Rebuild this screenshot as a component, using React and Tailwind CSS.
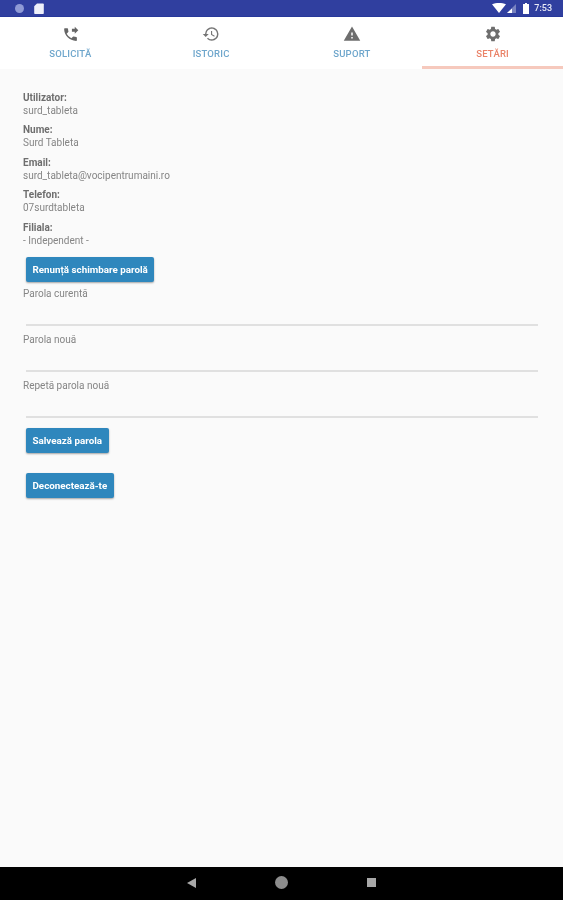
import React from 'react';
import { MdPhoneForwarded, MdHistory, MdWarning, MdSettings } from 'react-icons/md';

const profile = [
  ['Utilizator:', 'surd_tableta'],
  ['Nume:', 'Surd Tableta'],
  ['Email:', 'surd_tableta@vocipentrumaini.ro'],
  ['Telefon:', '07surdtableta'],
  ['Filiala:', '- Independent -'],
];

const StatusBar = () => (
  <div className="h-[17px] shrink-0 bg-[#303f9f] border-b border-[#27389a] flex items-center pl-[15px] pr-[11px]">
    <span className="w-[9px] h-[9px] rounded-full bg-[#8f9ad6]" />
    <svg className="ml-[10px]" width="10" height="11" viewBox="0 0 10 11">
      <path d="M3 0.5h6a.8.8 0 0 1 .8.8v8.9a.8.8 0 0 1-.8.8H1a.8.8 0 0 1-.8-.8V3.2z" fill="#eef0fa" />
    </svg>
    <div className="ml-auto flex items-center">
      <svg width="14" height="10" viewBox="0 0 14 10">
        <path d="M0 1.2C4 -.4 10 -.4 14 1.2L7 10z" fill="#fff" />
      </svg>
      <svg className="ml-[1px]" width="9" height="9" viewBox="0 0 9 9">
        <path d="M9 0v9H0z" fill="#fff" fillOpacity=".35" />
        <path d="M5 4.4V9H0z" fill="#fff" />
      </svg>
      <svg className="ml-[7px]" width="6" height="11" viewBox="0 0 6 11">
        <path d="M2 0h2v1h2v10H0V1h2z" fill="#fff" />
      </svg>
      <span className="ml-[5px] text-[9px] font-medium leading-none text-[#e8eaf6]">7:53</span>
    </div>
  </div>
);

const tabs = [
  { label: 'SOLICITĂ', icon: <MdPhoneForwarded size={17} color="#666" /> },
  { label: 'ISTORIC', icon: <MdHistory size={18} color="#757575" /> },
  { label: 'SUPORT', icon: <MdWarning size={18} color="#6e6e6e" /> },
  { label: 'SETĂRI', icon: <MdSettings size={18} color="#6e6e6e" />, active: true },
];

const Tabs = () => (
  <div className="h-[52px] shrink-0 bg-white grid grid-cols-4">
    {tabs.map((tab) => (
      <div
        key={tab.label}
        className={`flex flex-col items-center pt-[8px] border-b-[3px] ${tab.active ? 'border-[#f6c9bd]' : 'border-transparent'}`}
      >
        <div className="h-[18px] flex items-center justify-center">{tab.icon}</div>
        <span className={`mt-[5px] text-[9.5px] leading-[12px] font-medium tracking-[0.2px] ${tab.active ? 'text-[#ea8368]' : 'text-[#6ea6cc]'}`}>
          {tab.label}
        </span>
      </div>
    ))}
  </div>
);

const Button = ({ children, className = '' }) => (
  <button className={`block h-[25px] ml-[3px] px-[6.5px] pt-[1px] rounded-[2px] bg-[#2f87bd] text-white text-[9.8px] font-bold shadow-[0_1px_2px_rgba(0,0,0,0.35)] ${className}`}>
    {children}
  </button>
);

const PasswordField = ({ label }) => (
  <div className="h-[46px]">
    <div className="text-[10px] leading-[13px] text-[#858585]">{label}</div>
    <div className="h-[2px] ml-[3px] mr-[2px] mt-[24.5px] bg-[#e0e0e0]" />
  </div>
);

const App = () => (
  <div className="w-[563px] h-[900px] flex flex-col bg-[#fafafa] font-['Roboto',sans-serif] blur-[0.4px]">
    <StatusBar />
    <Tabs />

    <main className="flex-1 px-[23px] pt-[22px]">
      {profile.map(([label, value]) => (
        <div key={label} className="h-[32.4px]">
          <div className="text-[10px] leading-[13px] font-bold text-[#6e6e6e]">{label}</div>
          <div className="text-[10px] leading-[14px] text-[#858585]">{value}</div>
        </div>
      ))}

      <Button className="mt-[4px]">Renunță schimbare parolă</Button>

      <div className="mt-[5px]">
        <PasswordField label="Parola curentă" />
        <PasswordField label="Parola nouă" />
        <PasswordField label="Repetă parola nouă" />
      </div>

      <Button className="mt-[3px]">Salvează parola</Button>
      <Button className="mt-[20px]">Deconectează-te</Button>
    </main>

    <div className="h-[33px] shrink-0 bg-black flex items-center justify-center pb-[2px]">
      <svg width="9" height="10" viewBox="0 0 9 10" className="mr-[79px]">
        <path d="M9 0v10L0 5z" fill="#a8a8a8" />
      </svg>
      <span className="w-[13px] h-[13px] rounded-full bg-[#8d8d8d] mr-[79px]" />
      <span className="w-[9px] h-[9px] bg-[#a8a8a8]" />
    </div>
  </div>
);

export default App;
